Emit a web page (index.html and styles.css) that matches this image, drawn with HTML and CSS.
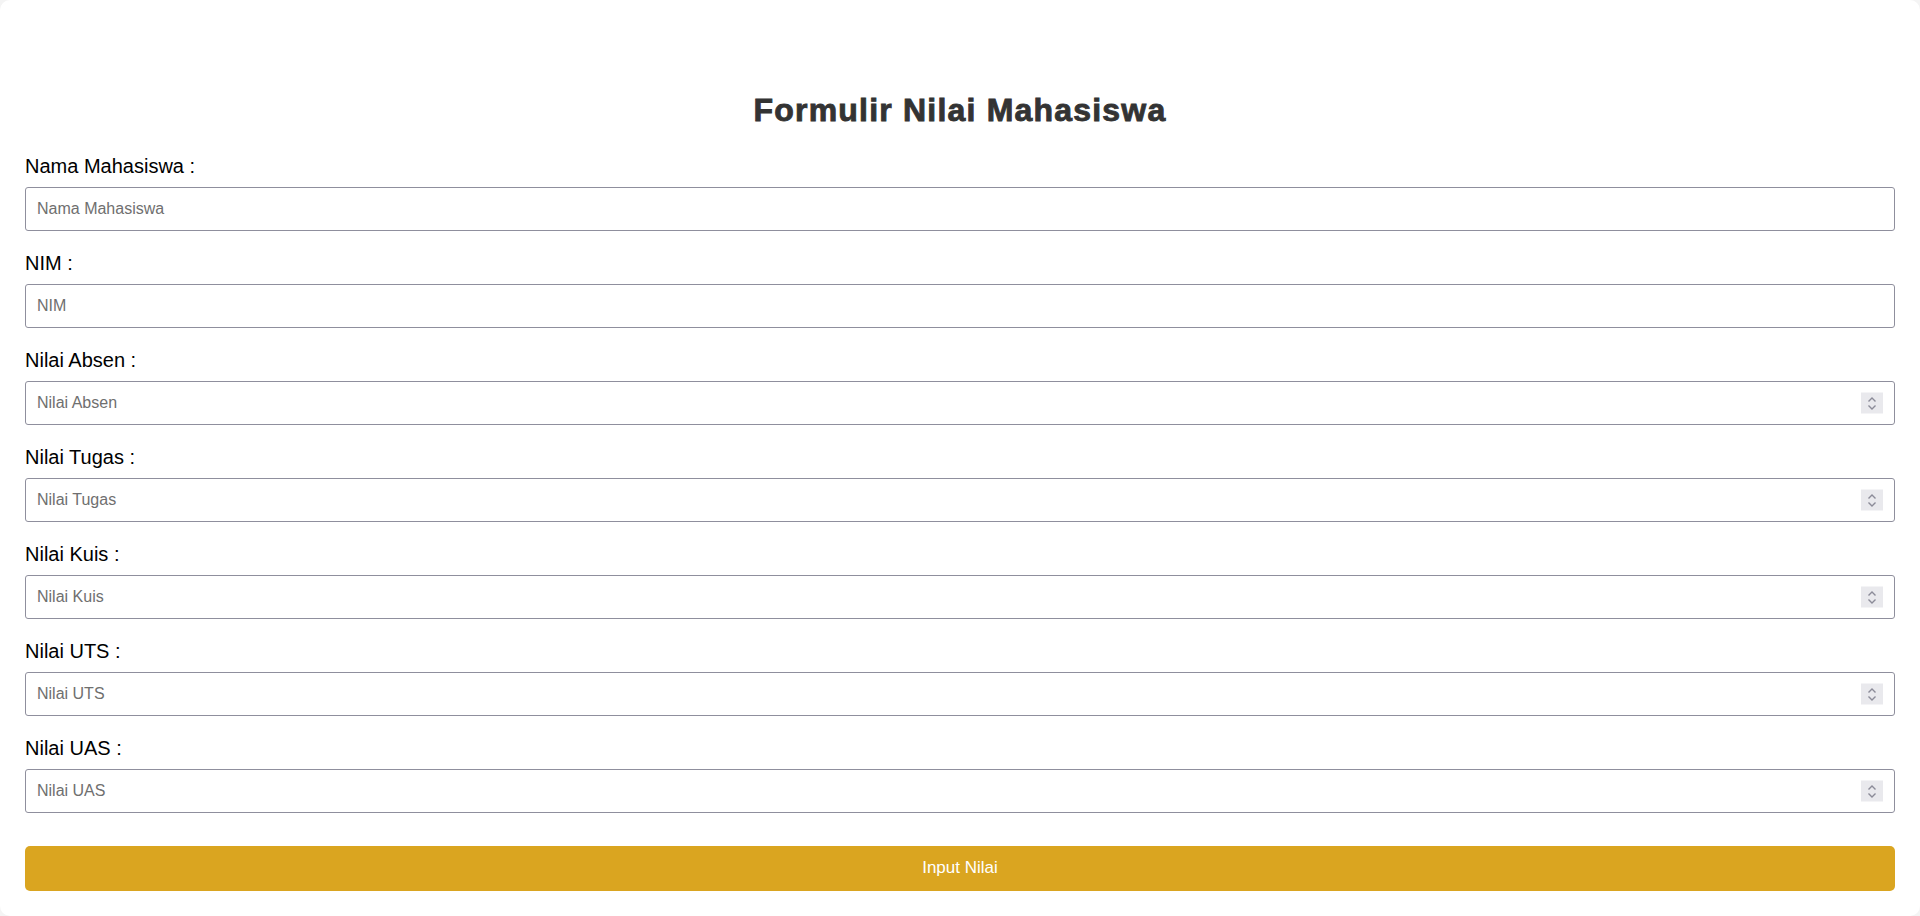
FILE: index.html
```html
<!DOCTYPE html>
<html lang="id">
<head>
<meta charset="utf-8">
<title>Formulir Nilai Mahasiswa</title>
<link rel="stylesheet" href="styles.css">
</head>
<body>
<div class="container">
  <h2 class="title">Formulir Nilai Mahasiswa</h2>
  <form class="form">
    <label class="label" for="nama">Nama Mahasiswa :</label>
    <div class="field"><input class="input" id="nama" type="text" placeholder="Nama Mahasiswa"></div>

    <label class="label" for="nim">NIM :</label>
    <div class="field"><input class="input" id="nim" type="text" placeholder="NIM"></div>

    <label class="label" for="absen">Nilai Absen :</label>
    <div class="field"><input class="input" id="absen" type="number" placeholder="Nilai Absen"><span class="spin"><svg width="12" height="18" viewBox="0 0 12 18"><path d="M2.5 7 L6 3.5 L9.5 7 M2.5 11 L6 14.5 L9.5 11" fill="none" stroke="#8b8b98" stroke-width="1.4"/></svg></span></div>

    <label class="label" for="tugas">Nilai Tugas :</label>
    <div class="field"><input class="input" id="tugas" type="number" placeholder="Nilai Tugas"><span class="spin"><svg width="12" height="18" viewBox="0 0 12 18"><path d="M2.5 7 L6 3.5 L9.5 7 M2.5 11 L6 14.5 L9.5 11" fill="none" stroke="#8b8b98" stroke-width="1.4"/></svg></span></div>

    <label class="label" for="kuis">Nilai Kuis :</label>
    <div class="field"><input class="input" id="kuis" type="number" placeholder="Nilai Kuis"><span class="spin"><svg width="12" height="18" viewBox="0 0 12 18"><path d="M2.5 7 L6 3.5 L9.5 7 M2.5 11 L6 14.5 L9.5 11" fill="none" stroke="#8b8b98" stroke-width="1.4"/></svg></span></div>

    <label class="label" for="uts">Nilai UTS :</label>
    <div class="field"><input class="input" id="uts" type="number" placeholder="Nilai UTS"><span class="spin"><svg width="12" height="18" viewBox="0 0 12 18"><path d="M2.5 7 L6 3.5 L9.5 7 M2.5 11 L6 14.5 L9.5 11" fill="none" stroke="#8b8b98" stroke-width="1.4"/></svg></span></div>

    <label class="label" for="uas">Nilai UAS :</label>
    <div class="field"><input class="input" id="uas" type="number" placeholder="Nilai UAS"><span class="spin"><svg width="12" height="18" viewBox="0 0 12 18"><path d="M2.5 7 L6 3.5 L9.5 7 M2.5 11 L6 14.5 L9.5 11" fill="none" stroke="#8b8b98" stroke-width="1.4"/></svg></span></div>

    <button class="btn" type="button">Input Nilai</button>
  </form>
</div>
</body>
</html>
```
FILE: styles.css
```css
html, body {
  margin: 0;
  padding: 0;
}
body {
  background: #f4f4f4;
  font-family: "Liberation Sans", Arial, sans-serif;
}
.container {
  background: #ffffff;
  border-radius: 10px;
  box-sizing: border-box;
  height: 916px;
  padding: 92px 25px 25px 25px;
}
.title {
  margin: 0 0 26.3px 0;
  font-size: 32px;
  line-height: 37px;
  font-weight: bold;
  color: #333333;
  text-align: center;
  letter-spacing: 1.2px;
  -webkit-text-stroke: 0.9px #333333;
}
.form {
  display: flex;
  flex-direction: column;
}
.label {
  display: block;
  font-size: 20px;
  line-height: 23px;
  color: #000000;
  margin-bottom: 9px;
}
.field {
  position: relative;
  margin-bottom: 21px;
}
.input {
  display: block;
  width: 100%;
  height: 44px;
  box-sizing: border-box;
  border: 1px solid #8f8f9d;
  border-radius: 3px;
  padding: 0 11px;
  font-family: "Liberation Sans", Arial, sans-serif;
  font-size: 16px;
  color: #000;
  background: #fff;
  outline: none;
  -moz-appearance: textfield;
}
.input::placeholder {
  color: #6f6f6f;
}
.input::-webkit-inner-spin-button,
.input::-webkit-outer-spin-button {
  -webkit-appearance: none;
  margin: 0;
}
.spin {
  position: absolute;
  right: 12px;
  top: 50%;
  transform: translateY(-50%);
  width: 22px;
  height: 21px;
  background: #e9e9ed;
  display: flex;
  align-items: center;
  justify-content: center;
}
.btn {
  margin-top: 11.5px;
  height: 45px;
  width: 100%;
  border: none;
  border-radius: 5px;
  background: #daa520;
  color: #ffffff;
  font-family: "Liberation Sans", Arial, sans-serif;
  font-size: 17px;
  cursor: pointer;
}
```
